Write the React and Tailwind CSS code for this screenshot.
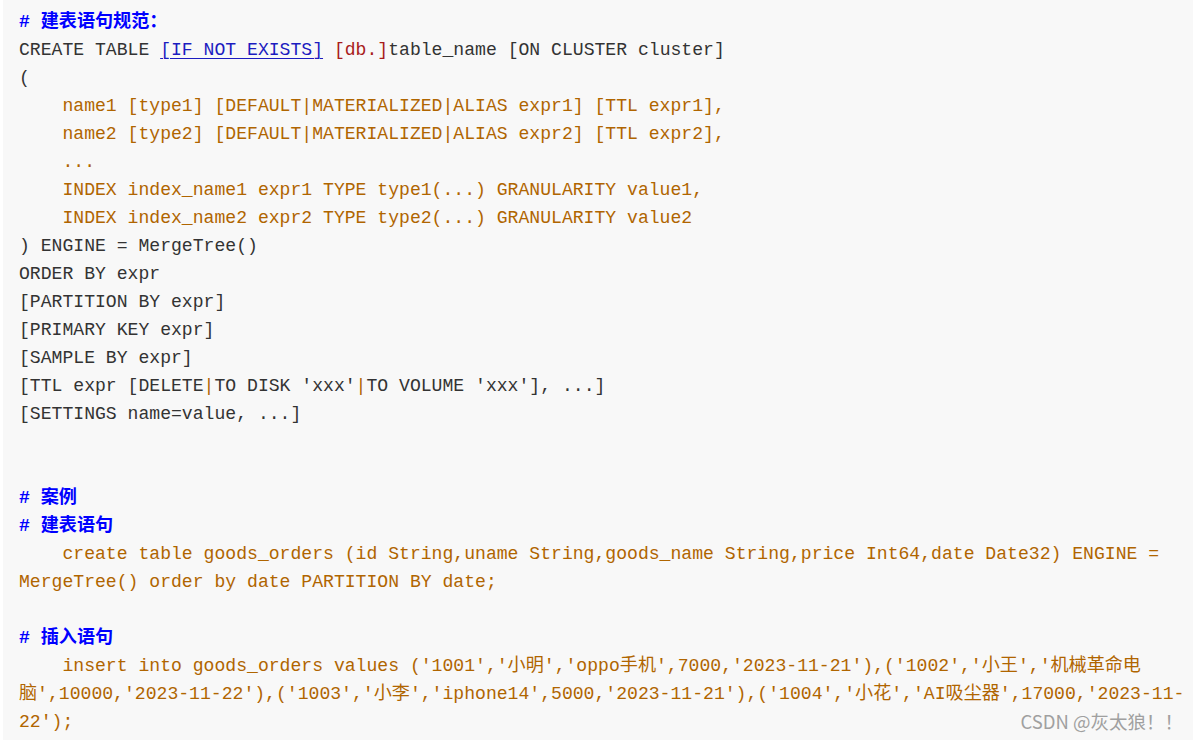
const DARK = "text-[#333333]";
const ORANGE = "text-[#b06500]";
const LINK = "text-[#1c1cc0] underline decoration-1 underline-offset-[3px]";
const RED = "text-[#a81c1c]";
const COMMENT = "text-[#0000ff] font-bold";

// each line is a list of [text, className]
const lines = [
  [["# 建表语句规范：", COMMENT]],
  [
    ["CREATE TABLE ", DARK],
    ["[IF NOT EXISTS]", LINK],
    [" ", DARK],
    ["[db.]", RED],
    ["table_name [ON CLUSTER cluster]", DARK],
  ],
  [["(", DARK]],
  [["    name1 [type1] [DEFAULT|MATERIALIZED|ALIAS expr1] [TTL expr1],", ORANGE]],
  [["    name2 [type2] [DEFAULT|MATERIALIZED|ALIAS expr2] [TTL expr2],", ORANGE]],
  [["    ...", ORANGE]],
  [["    INDEX index_name1 expr1 TYPE type1(...) GRANULARITY value1,", ORANGE]],
  [["    INDEX index_name2 expr2 TYPE type2(...) GRANULARITY value2", ORANGE]],
  [[") ENGINE = MergeTree()", DARK]],
  [["ORDER BY expr", DARK]],
  [["[PARTITION BY expr]", DARK]],
  [["[PRIMARY KEY expr]", DARK]],
  [["[SAMPLE BY expr]", DARK]],
  [
    ["[TTL expr [DELETE", DARK],
    ["|", ORANGE],
    ["TO DISK 'xxx'", DARK],
    ["|", ORANGE],
    ["TO VOLUME 'xxx'], ...]", DARK],
  ],
  [["[SETTINGS name=value, ...]", DARK]],
  [],
  [],
  [["# 案例", COMMENT]],
  [["# 建表语句", COMMENT]],
  [
    [
      "    create table goods_orders (id String,uname String,goods_name String,price Int64,date Date32) ENGINE =",
      ORANGE,
    ],
  ],
  [["MergeTree() order by date PARTITION BY date;", ORANGE]],
  [],
  [["# 插入语句", COMMENT]],
  [
    [
      "    insert into goods_orders values ('1001','小明','oppo手机',7000,'2023-11-21'),('1002','小王','机械革命电",
      ORANGE,
    ],
  ],
  [
    [
      "脑',10000,'2023-11-22'),('1003','小李','iphone14',5000,'2023-11-21'),('1004','小花','AI吸尘器',17000,'2023-11-",
      ORANGE,
    ],
  ],
  [["22');", ORANGE]],
];

export default function App() {
  return (
    <div className="w-[1193px] h-[740px] overflow-hidden bg-white pl-[3px]">
      <div className="relative h-full bg-[#f8f8f8] pl-[16px] pt-[8px] font-['Liberation_Mono','Noto_Sans_CJK_SC',monospace] text-[18.1px] leading-[28px]">
        {lines.map((segs, i) => (
          <div key={i} className="h-[28px] whitespace-pre">
            {segs.map(([text, cls], j) => (
              <span key={j} className={cls}>
                {text}
              </span>
            ))}
          </div>
        ))}

        {/* watermark */}
        <div className="absolute right-[10px] bottom-[7px] font-['Noto_Sans_CJK_SC',sans-serif] text-[18.5px] leading-[24px] text-[#a0a0a0]">
          CSDN @灰太狼！！
        </div>
      </div>
    </div>
  );
}
